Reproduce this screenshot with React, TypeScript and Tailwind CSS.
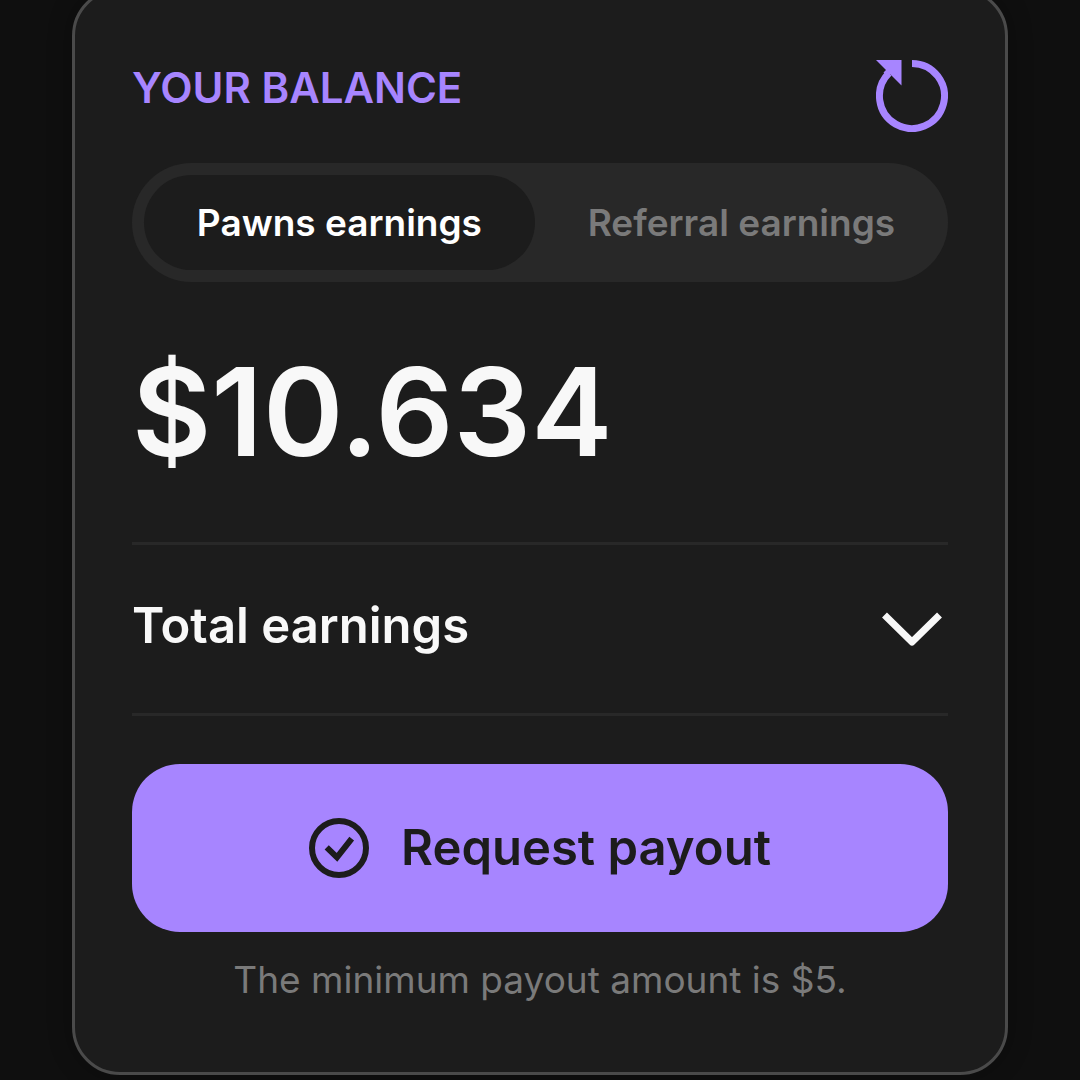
import { useState } from 'react';

const tabs = [
  { id: 'pawns', label: 'Pawns earnings' },
  { id: 'referral', label: 'Referral earnings' },
];

function RefreshIcon() {
  return (
    <svg viewBox="0 0 72 72" className="block size-[72px]" fill="none" aria-hidden="true">
      <path d="M36 3.5A32.5 32.5 0 1 1 13 13" stroke="currentColor" strokeWidth="7" />
      <path d="M0 0H25.5V25.5Z" fill="currentColor" />
      <path d="M10 10L14 14" stroke="currentColor" strokeWidth="7" />
    </svg>
  );
}

function ChevronIcon() {
  return (
    <svg viewBox="0 0 72 72" className="block size-[72px]" fill="none" aria-hidden="true">
      <path d="M8.5 25L36 52L63.5 25" stroke="currentColor" strokeWidth="7" strokeLinejoin="round" />
    </svg>
  );
}

function CheckIcon() {
  return (
    <svg viewBox="0 0 60 60" className="block size-[60px]" fill="none" aria-hidden="true">
      <circle cx="30" cy="30" r="27" stroke="currentColor" strokeWidth="6" />
      <path d="M17.7 29.3L28 39.3L42.7 20.7" stroke="currentColor" strokeWidth="6" />
    </svg>
  );
}

export default function App() {
  const [active, setActive] = useState('pawns');
  const [open, setOpen] = useState(false);

  return (
    <main className="min-h-screen overflow-hidden bg-[#0f0f0f] px-[72px] font-['Inter','Liberation_Sans',sans-serif]">
      <section className="-mt-3 rounded-[48px] border-3 border-[#4a4a4a] bg-[#1c1c1c] px-[57px] pt-[69px] pb-[68px] text-[#f8f8f8] shadow-[0_0_24px_rgba(0,0,0,0.3)]">
        <div className="flex items-start justify-between">
          <h2 className="text-[42px] leading-[56px] font-semibold text-[#a785ff]">YOUR BALANCE</h2>
          <button type="button" aria-label="Refresh balance" className="text-[#a785ff]">
            <RefreshIcon />
          </button>
        </div>

        <div role="tablist" className="mt-[31px] flex rounded-full bg-[#282828] py-3 pl-3">
          {tabs.map((tab) => (
            <button
              key={tab.id}
              type="button"
              role="tab"
              aria-selected={active === tab.id}
              onClick={() => setActive(tab.id)}
              className={`h-[95px] flex-auto rounded-full px-12 text-center text-[37px] font-semibold whitespace-nowrap ${
                active === tab.id ? 'bg-[#1c1c1c] text-white' : 'text-[#7a7a7a]'
              }`}
            >
              {tab.label}
            </button>
          ))}
        </div>

        <p className="py-[50px] text-[122px] leading-[160px] font-semibold">$10.634</p>

        <button
          type="button"
          aria-expanded={open}
          onClick={() => setOpen(!open)}
          className="flex w-full items-center justify-between border-y-3 border-[#282828] pt-[45px] pb-[51px] text-left text-[49px] leading-[72px] font-semibold"
        >
          Total earnings
          <ChevronIcon />
        </button>

        <button
          type="button"
          className="mt-12 flex h-[168px] w-full items-center justify-center gap-8 rounded-[48px] bg-[#a785ff] text-[49px] font-semibold text-[#1c1c1c]"
        >
          <CheckIcon />
          Request payout
        </button>
        <p className="mt-6 text-center text-[37px] leading-[48px] text-[#7a7a7a]">
          The minimum payout amount is $5.
        </p>
      </section>
    </main>
  );
}
